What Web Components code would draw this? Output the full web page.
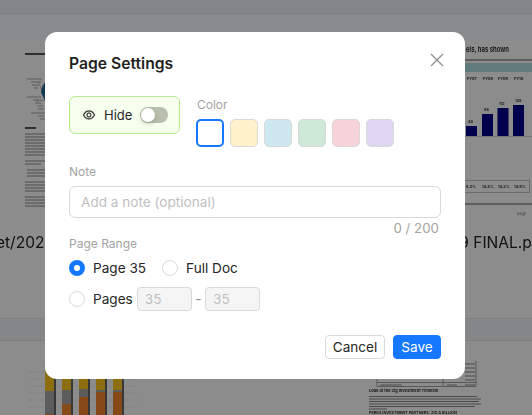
<!DOCTYPE html>
<html lang="en">
<head>
<meta charset="utf-8">
<title>Page Settings</title>
<style>
  html, body { margin: 0; height: 100%; overflow: hidden; background: #fff; }
  body { font-family: Inter, "Liberation Sans", sans-serif; }
</style>
</head>
<body>
<doc-backdrop>
  <doc-thumb slot="top" caption="et/20200" align="left">
    <svg width="266" height="182" viewBox="0 40 266 182">
      <rect x="25" y="53" width="32" height="2" fill="#555"/>
      <path d="M62 74 C50 76 42 82 41 92 L45 101 L62 90 Z" fill="#1c6a94"/>
      <path d="M45 101 L62 90 L62 110 Z" fill="#2f8a70"/>
      <path d="M27 79h15M31 82h10M32 85h6M34 88h4M27 97h14M33 100h6M35 103h6M37 106h6M38 109h6M31 113h14M38 116h6M40 119h5" stroke="#aaa" stroke-width="1.1" fill="none"/>
      <path d="M38 82 L42 90M36 101 L46 100" stroke="#888" stroke-width=".6"/>
      <rect x="25" y="127" width="11" height="2" fill="#555"/>
      <path d="M25 134h40M25 137h40M25 140h40M25 143h40M25 146h40M25 149h40M25 152h40M25 155h40M25 161h40M25 164h16M27 170h40M27 173h40M27 176h40M25 182h40M25 185h40M25 188h40M25 191h40M25 197h40M25 200h40M25 203h40M25 206h40" stroke="#8c8c8c" stroke-width="1.200"/>
    </svg>
  </doc-thumb>
  <doc-thumb slot="top" caption="19 FINAL.pdf" align="right">
    <svg width="266" height="182" viewBox="266 40 266 182">
      <text x="466" y="51.500" font-size="8" font-weight="600" fill="#222" font-family="Inter, sans-serif" textLength="43" lengthAdjust="spacingAndGlyphs">els, has shown</text>
      <rect x="266" y="59" width="266" height="2" fill="#aaa"/>
      <rect x="266" y="63" width="266" height="9" fill="#aee0e0"/>
      <g font-size="3.800" font-weight="700" fill="#333" font-family="Inter, sans-serif">
        <text x="467" y="80">FY07</text><text x="483" y="80">FY08</text><text x="498" y="80">FY09</text><text x="514" y="80">FY10</text>
        <text x="468" y="123">48</text><text x="484" y="111">85</text><text x="499" y="105">112</text><text x="515" y="102">125</text>
        <text x="466" y="188">8.2%</text><text x="482" y="188">14.4%</text><text x="498" y="188">14.2%</text><text x="514" y="188">14.9%</text>
      </g>
      <g fill="#00008c">
        <rect x="466" y="126" width="11" height="10"/>
        <rect x="482" y="114" width="11" height="22"/>
        <rect x="497.500" y="108" width="11" height="28"/>
        <rect x="513" y="105" width="11" height="31"/>
      </g>
      <path d="M460 136.500h72" stroke="#bbb" stroke-width=".6"/>
      <path d="M460 180.500h69.500v12H460" stroke="#aaa" stroke-width=".7" fill="none"/>
      <rect x="266" y="203" width="266" height="2" fill="#aaa"/>
      <text x="517" y="215" font-size="3.800" fill="#888" font-family="Inter, sans-serif">page</text>
    </svg>
  </doc-thumb>
  <doc-thumb slot="bottom" align="left">
    <svg width="266" height="75" viewBox="0 340 266 75">
      <path d="M28 371h110M28 378h110M28 385h110M28 392h110M28 399h110M28 406h110" stroke="#e4e4e4" stroke-width=".6"/>
      <g fill="#ffc81e">
        <rect x="45" y="370" width="9" height="20"/><rect x="62" y="370" width="9" height="19"/><rect x="79" y="370" width="9" height="18"/><rect x="96" y="370" width="9" height="19"/><rect x="113" y="370" width="9" height="19"/>
      </g>
      <g fill="#a8a8a8">
        <rect x="45" y="390" width="9" height="23"/><rect x="62" y="389" width="9" height="14"/><rect x="79" y="388" width="9" height="8"/><rect x="96" y="389" width="9" height="2"/><rect x="113" y="389" width="9" height="2"/>
      </g>
      <g fill="#f5852d">
        <rect x="45" y="413" width="9" height="2"/><rect x="62" y="403" width="9" height="12"/><rect x="79" y="396" width="9" height="19"/><rect x="96" y="391" width="9" height="24"/><rect x="113" y="391" width="9" height="24"/>
      </g>
      <path d="M55 370v45M72 370v45M89 370v45M106 370v45M123 370v45" stroke="#666" stroke-width="2"/>
    </svg>
  </doc-thumb>
  <doc-thumb slot="bottom" align="right">
    <svg width="266" height="75" viewBox="266 340 266 75">
      <path d="M377 360v25.500h99V360M377 381.500h99M443 360v25" stroke="#777" stroke-width=".7" fill="none"/>
      <path d="M465 363h10M465 367h10M465 371h10M465 375h10M465 379h10M465 384h10" stroke="#888" stroke-width="1.200"/>
      <path d="M380 384h22M447 384h10" stroke="#888" stroke-width="1"/>
      <text x="369" y="390.500" font-size="4" font-weight="700" fill="#333" font-family="Inter, sans-serif">Look at the Zig Investment Timeline</text>
      <path d="M369 395.500h108M369 398h112M369 400.500h110M369 403h112M369 405.500h106M369 408h18" stroke="#888" stroke-width="1"/>
      <text x="369" y="412.500" font-size="3.800" font-weight="700" fill="#333" font-family="Inter, sans-serif">PERKS INVESTMENT PARTNERS: ZIG A BILLION</text>
    </svg>
  </doc-thumb>
</doc-backdrop>

<modal-layer>
  <page-settings></page-settings>
</modal-layer>

<script>
const doc = document;

const define = (name, html, base = HTMLElement) => {
  const template = doc.createElement("template");
  template.innerHTML = html;
  customElements.define(
    name,
    class extends base {
      constructor() {
        super();
        this.attachShadow({ mode: "open" }).appendChild(template.content.cloneNode(true));
        if (this.setup) this.setup();
      }
    }
  );
};

// blurred document list that sits behind the dialog
define("doc-backdrop", `
<style>
  :host { display: block; height: 415px; overflow: hidden; background: #fff; }
  .top { height: 13px; background: #f2f4f6; border-bottom: 1px solid #e2e4e6; }
  .band { height: 26px; background: #fcfdff; }
  .grid { display: grid; grid-template-columns: 266px 266px; }
  .strip { height: 21px; background: #f2f4f6; border-top: 1px solid #e8e8e8; border-bottom: 1px solid #e8e8e8; }
</style>
<div class="top"></div>
<div class="band"></div>
<div class="grid"><slot name="top"></slot></div>
<div class="strip"></div>
<div class="grid"><slot name="bottom"></slot></div>
`);

class DocThumbBase extends HTMLElement {
  setup() {
    const caption = this.shadowRoot.querySelector(".caption");
    const text = this.getAttribute("caption");
    if (text) {
      caption.textContent = text;
      caption.classList.add(this.getAttribute("align"));
    } else {
      caption.remove();
    }
  }
}

define("doc-thumb", `
<style>
  :host { display: block; min-width: 0; overflow: hidden; }
  ::slotted(svg) { display: block; filter: blur(.6px); }
  .caption {
    height: 96px;
    padding-top: 10px;
    box-sizing: border-box;
    font: 15.500px/22px Inter, sans-serif;
    color: #222;
    white-space: nowrap;
    filter: blur(.2px);
  }
  .left { margin-left: -4px; }
  .right { margin-left: 187px; }
</style>
<slot></slot>
<div class="caption"></div>
`, DocThumbBase);

// dim layer with the dialog on top of it
define("modal-layer", `
<style>
  :host {
    position: fixed;
    inset: 0;
    display: flex;
    align-items: flex-start;
    padding: 32px 0 0 45px;
    background: rgba(0, 0, 0, .45);
  }
</style>
<slot></slot>
`);

define("field-label", `
<style>
  :host { display: block; font-size: 12px; line-height: 16px; color: #a3a3a3; }
</style>
<slot></slot>
`);

define("eye-switch", `
<style>
  :host {
    display: flex;
    align-items: center;
    box-sizing: border-box;
    width: 111px;
    height: 38px;
    padding: 0 12px;
    background: #f6ffed;
    border: 1px solid #b7eb8f;
    border-radius: 6px;
    font-size: 13px;
    color: #262626;
  }
  svg { display: block; flex: none; }
  span { margin: 0 8px 0 8px; }
  .track {
    flex: none;
    width: 28px;
    height: 16px;
    padding: 1px;
    box-sizing: border-box;
    border-radius: 8px;
    background: #b9bfad;
  }
  .thumb {
    width: 14px;
    height: 14px;
    border-radius: 50%;
    background: #fff;
    box-shadow: 0 2px 4px rgba(0, 35, 11, .2);
  }
</style>
<svg width="14" height="14" viewBox="0 0 1024 1024" fill="#262626" stroke="#262626" stroke-width="16">
  <path d="M942.200 486.200C847.400 286.500 704.100 186 512 186c-192.200 0-335.400 100.500-430.200 300.300a60.300 60.300 0 0 0 0 51.500C176.600 737.500 319.900 838 512 838c192.200 0 335.400-100.500 430.200-300.300 7.700-16.200 7.700-35 0-51.500zM512 766c-161.300 0-279.400-81.800-362.700-254C232.600 339.800 350.700 258 512 258c161.300 0 279.400 81.800 362.700 254C791.500 684.200 673.400 766 512 766z"/>
  <path d="M508 336c-97.200 0-176 78.800-176 176s78.800 176 176 176 176-78.800 176-176-78.800-176-176-176zm0 288c-61.900 0-112-50.100-112-112s50.100-112 112-112 112 50.100 112 112-50.100 112-112 112z"/>
</svg>
<span><slot></slot></span>
<div class="track"><div class="thumb"></div></div>
`);

define("color-swatch", `
<style>
  :host {
    display: block;
    box-sizing: border-box;
    width: 28px;
    height: 28px;
    border: 1.500px solid #d9d9d9;
    border-radius: 5px;
    background: var(--swatch, #fff);
  }
  :host([selected]) { border: 2px solid #1677ff; }
</style>
`);

define("radio-option", `
<style>
  :host { display: inline-flex; align-items: center; font-size: 13.600px; line-height: 22px; color: #262626; }
  .dot {
    flex: none;
    width: 16px;
    height: 16px;
    margin-right: 8px;
    box-sizing: border-box;
    border: 1px solid #d9d9d9;
    border-radius: 50%;
    background: #fff;
  }
  :host([checked]) .dot { border: 5px solid #1677ff; }
</style>
<div class="dot"></div>
<slot></slot>
`);

define("range-input", `
<style>
  :host {
    display: block;
    box-sizing: border-box;
    width: 55px;
    height: 24px;
    padding: 0 7px;
    background: #f5f5f5;
    border: 1px solid #d9d9d9;
    border-radius: 4px;
    font-size: 13.600px;
    line-height: 22px;
    color: #bfbfbf;
  }
</style>
<slot></slot>
`);

define("action-button", `
<style>
  :host {
    display: block;
    box-sizing: border-box;
    width: 60px;
    height: 24px;
    background: #fff;
    border: 1px solid #d9d9d9;
    border-radius: 4px;
    font-size: 13.600px;
    line-height: 22px;
    text-align: center;
    color: #262626;
  }
  :host([primary]) { width: 48px; background: #1677ff; border-color: #1677ff; color: #fff; }
</style>
<slot></slot>
`);

define("page-settings", `
<style>
  :host {
    display: block;
    position: relative;
    box-sizing: border-box;
    width: 420px;
    height: 347px;
    padding: 20px 24px 0;
    background: #fff;
    border-radius: 12px;
    font-family: Inter, "Liberation Sans", sans-serif;
  }
  h2 { margin: 0; font-size: 15.700px; line-height: 24px; font-weight: 600; color: #1f1f1f; }
  .close { position: absolute; top: 21px; right: 21px; display: block; }
  .head { display: flex; gap: 16px; margin-top: 20px; height: 51px; }
  .colors { display: flex; flex-direction: column; gap: 7px; padding-top: 1px; }
  .colors field-label { margin-left: 1px; margin-bottom: -1px; }
  .swatches { display: flex; gap: 6px; }
  .note-label { margin-top: 17px; }
  .note {
    box-sizing: border-box;
    height: 32px;
    margin-top: 6px;
    padding: 0 11px;
    border: 1px solid #d9d9d9;
    border-radius: 6px;
    font-size: 13.600px;
    line-height: 30px;
    color: #bfbfbf;
  }
  .count { margin-top: -1px; text-align: right; padding-right: 2px; font-size: 13.300px; line-height: 22px; color: #a3a3a3; }
  .range-label { margin-top: -3px; }
  .row { display: flex; align-items: center; height: 22px; margin-top: 5px; }
  .row + .row { margin-top: 9px; }
  .full { margin-left: 16px; }
  .dash { margin: 0 3.500px; font-size: 13.600px; color: #8c8c8c; }
  .pages { margin-right: 4px; }
  .actions { position: absolute; right: 24px; bottom: 20px; display: flex; gap: 8px; }
</style>
<h2>Page Settings</h2>
<svg class="close" width="14" height="14" viewBox="0 0 14 14" fill="none" stroke="#8c8c8c" stroke-width="1.200">
  <path d="M1 1l12 12M13 1L1 13"/>
</svg>
<div class="head">
  <eye-switch>Hide</eye-switch>
  <div class="colors">
    <field-label>Color</field-label>
    <div class="swatches">
      <color-swatch selected></color-swatch>
      <color-swatch style="--swatch:#fff1c9"></color-swatch>
      <color-swatch style="--swatch:#cde8f0"></color-swatch>
      <color-swatch style="--swatch:#cfe9d8"></color-swatch>
      <color-swatch style="--swatch:#f8d2d9"></color-swatch>
      <color-swatch style="--swatch:#dfd6f1"></color-swatch>
    </div>
  </div>
</div>
<field-label class="note-label">Note</field-label>
<div class="note">Add a note (optional)</div>
<div class="count">0 / 200</div>
<field-label class="range-label">Page Range</field-label>
<div class="row">
  <radio-option checked>Page 35</radio-option>
  <radio-option class="full">Full Doc</radio-option>
</div>
<div class="row">
  <radio-option class="pages">Pages</radio-option>
  <range-input>35</range-input>
  <span class="dash">-</span>
  <range-input>35</range-input>
</div>
<div class="actions">
  <action-button>Cancel</action-button>
  <action-button primary>Save</action-button>
</div>
`);
</script>
</body>
</html>
